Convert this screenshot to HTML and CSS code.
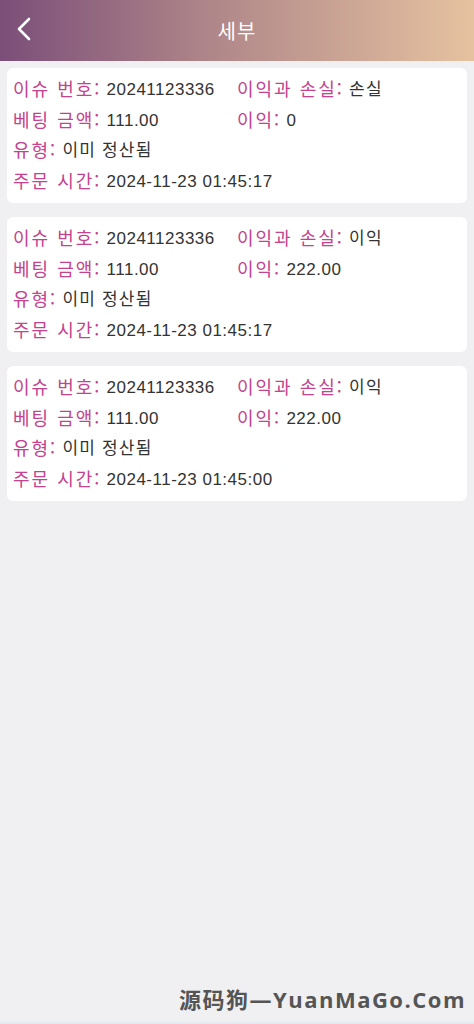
FILE: index.html
```html
<!DOCTYPE html>
<html lang="ko">
<head>
  <meta charset="UTF-8" />
  <meta name="viewport" content="width=device-width, initial-scale=1.0"/>
  <title>세부</title>
  <link rel="stylesheet" href="styles.css">
</head>
<body>

<div class="header">
  <a class="back" href="#">
    <svg width="16" height="24" viewBox="0 0 16 24"><path d="M13 2 L3 12 L13 22" fill="none" stroke="#fff" stroke-width="2.6" stroke-linecap="round" stroke-linejoin="round"/></svg>
  </a>
  <h1>세부</h1>
</div>

<div class="list">
  <div class="card">
    <div class="row">
      <div class="item"><span class="label">이슈 번호:</span> 20241123336</div>
      <div class="item"><span class="label">이익과 손실:</span> <span class="ko">손실</span></div>
    </div>
    <div class="row">
      <div class="item"><span class="label">베팅 금액:</span> 111.00</div>
      <div class="item"><span class="label">이익:</span> 0</div>
    </div>
    <div class="row"><div class="item"><span class="label">유형:</span> <span class="ko">이미 정산됨</span></div></div>
    <div class="row"><div class="item"><span class="label">주문 시간:</span> 2024-11-23 01:45:17</div></div>
  </div>

  <div class="card">
    <div class="row">
      <div class="item"><span class="label">이슈 번호:</span> 20241123336</div>
      <div class="item"><span class="label">이익과 손실:</span> <span class="ko">이익</span></div>
    </div>
    <div class="row">
      <div class="item"><span class="label">베팅 금액:</span> 111.00</div>
      <div class="item"><span class="label">이익:</span> 222.00</div>
    </div>
    <div class="row"><div class="item"><span class="label">유형:</span> <span class="ko">이미 정산됨</span></div></div>
    <div class="row"><div class="item"><span class="label">주문 시간:</span> 2024-11-23 01:45:17</div></div>
  </div>

  <div class="card">
    <div class="row">
      <div class="item"><span class="label">이슈 번호:</span> 20241123336</div>
      <div class="item"><span class="label">이익과 손실:</span> <span class="ko">이익</span></div>
    </div>
    <div class="row">
      <div class="item"><span class="label">베팅 금액:</span> 111.00</div>
      <div class="item"><span class="label">이익:</span> 222.00</div>
    </div>
    <div class="row"><div class="item"><span class="label">유형:</span> <span class="ko">이미 정산됨</span></div></div>
    <div class="row"><div class="item"><span class="label">주문 시간:</span> 2024-11-23 01:45:00</div></div>
  </div>
</div>

<div class="watermark"><span class="cn">源码狗</span>—YuanMaGo.Com</div>
<div class="bottom-line"></div>

</body>
</html>
```

FILE: styles.css
```css
* {
  box-sizing: border-box;
}

body {
  margin: 0;
  min-height: 1024px;
  background-color: #f0f0f3;
  font-family: "Liberation Sans", "Noto Sans CJK KR", sans-serif;
  color: #333;
  position: relative;
}

.header {
  height: 61px;
  background: linear-gradient(90deg, #7b4e79 0%, #b08789 45%, #e6c2a0 100%);
  display: flex;
  align-items: center;
  justify-content: center;
  position: relative;
}

.back {
  position: absolute;
  left: 16px;
  top: 17px;
  display: block;
  width: 16px;
  height: 24px;
}

.header h1 {
  margin: 0;
  font-size: 20px;
  font-weight: normal;
  letter-spacing: 1px;
  color: #fff;
  font-family: "Noto Sans CJK KR", sans-serif;
}

.list {
  padding: 7px 7px;
  display: flex;
  flex-direction: column;
  gap: 14px;
}

.card {
  background-color: #fff;
  border-radius: 6px;
  padding: 5px 6px 8px;
}

.row {
  display: flex;
  height: 30.5px;
  align-items: center;
}

.item {
  width: 224px;
  font-size: 17px;
  letter-spacing: 0.5px;
  white-space: nowrap;
}

.label {
  color: #c4428e;
  font-size: 18px;
  letter-spacing: 2px;
  font-family: "Noto Sans CJK KR", sans-serif;
  vertical-align: -1px;
}

.ko {
  font-family: "Noto Sans CJK KR", sans-serif;
  font-size: 17px;
  letter-spacing: 1.2px;
}

.watermark {
  position: absolute;
  right: 8px;
  bottom: 10px;
  font-family: "Open Sans", "Noto Sans CJK SC", sans-serif;
  font-weight: bold;
  font-size: 22px;
  letter-spacing: 1.5px;
  color: #555;
}

.watermark .cn {
  font-family: "Noto Sans CJK SC", sans-serif;
}

.bottom-line {
  position: absolute;
  left: 0;
  right: 0;
  bottom: 0;
  height: 2px;
  background-color: #e5e8ee;
}
```
